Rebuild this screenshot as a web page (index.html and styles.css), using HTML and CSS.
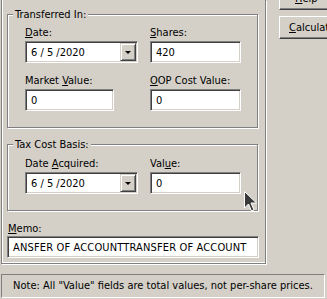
FILE: index.html
```html
<!DOCTYPE html>
<html lang="en">
<head>
    <title>Transfer In</title>
    <link rel="stylesheet" href="styles.css">
</head>
<body>
    <div class="window">
        <div class="panel">
            <fieldset class="group">
                <legend>Transferred In:</legend>
                <div class="fields">
                    <div class="field">
                        <label><u>D</u>ate:</label>
                        <div class="box combo">
                            <span class="value">6 / 5 /2020</span>
                            <span class="drop"><span class="arrow"></span></span>
                        </div>
                    </div>
                    <div class="field">
                        <label><u>S</u>hares:</label>
                        <div class="box wide"><span class="value">420</span></div>
                    </div>
                    <div class="field row2">
                        <label>Market <u>V</u>alue:</label>
                        <div class="box short"><span class="value">0</span></div>
                    </div>
                    <div class="field row2">
                        <label><u>O</u>OP Cost Value:</label>
                        <div class="box wide"><span class="value">0</span></div>
                    </div>
                </div>
            </fieldset>
            <fieldset class="group tax">
                <legend>Tax Cost Basis:</legend>
                <div class="fields">
                    <div class="field">
                        <label>Date <u>A</u>cquired:</label>
                        <div class="box combo">
                            <span class="value">6 / 5 /2020</span>
                            <span class="drop"><span class="arrow"></span></span>
                        </div>
                    </div>
                    <div class="field">
                        <label>Val<u>u</u>e:</label>
                        <div class="box wide"><span class="value">0</span></div>
                    </div>
                </div>
            </fieldset>
            <div class="memo">
                <label><u>M</u>emo:</label>
                <div class="box memo-box"><span class="value">ANSFER OF ACCOUNTTRANSFER OF ACCOUNT</span></div>
            </div>
        </div>
        <div class="buttons">
            <div class="btn help"><u>H</u>elp</div>
            <div class="btn calc"><u>C</u>alculate</div>
        </div>
    </div>
    <div class="note">Note: All "Value" fields are total values, not per-share prices.</div>

    <svg class="cursor" width="14" height="22" viewBox="0 0 14 22">
        <path d="M0.5 0.5 L0.5 17 L4.5 13 L7.5 20 L10 19 L7 12 L12.5 12 Z" fill="#3a3a3a" stroke="#ffffff" stroke-width="1"/>
    </svg>
</body>
</html>
```

FILE: styles.css
```css
body{
    margin: 0;
    background-color: #d4d0c8;
    font-family: "DejaVu Sans Condensed", "DejaVu Sans", sans-serif;
    font-stretch: condensed;
    font-size: 11px;
    line-height: 13px;
    color: #000000;
    overflow: hidden;
}
.window{
    display: flex;
    align-items: flex-start;
}
.panel{
    box-sizing: border-box;
    width: 265px;
    margin-left: 1px;
    padding: 8px 7px 5px 5px;
    border: 1px solid #808080;
    border-top: none;
    box-shadow: inset 1px 0 0 #ffffff, 1px 1px 0 #ffffff, inset 0 -1px 0 #ffffff;
}
.group{
    margin: 0;
    padding: 5px 0 16px 17px;
    border: 1px solid #808080;
    box-shadow: inset 1px 1px 0 #ffffff, 1px 1px 0 #ffffff;
    min-inline-size: 0;
}
.group legend{
    margin-left: -12px;
    padding: 0 2px;
    background-color: #d4d0c8;
}
.tax{
    margin-top: 10px;
    padding-top: 6px;
}
.fields{
    display: grid;
    grid-template-columns: 113px 91px;
    column-gap: 12px;
}
.field{
    display: flex;
    flex-direction: column;
    align-items: flex-start;
}
.row2{
    margin-top: 11px;
}
label{
    display: block;
    height: 13px;
    margin-bottom: 2px;
}
.box{
    box-sizing: border-box;
    height: 22px;
    display: flex;
    align-items: center;
    background-color: #ffffff;
    border: 1px solid;
    border-color: #808080 #ffffff #ffffff #808080;
    box-shadow: inset 1px 1px 0 #404040, inset -1px -1px 0 #d4d0c8;
}
.value{
    padding-left: 5px;
    white-space: nowrap;
}
.combo{
    width: 113px;
    justify-content: space-between;
    padding-right: 1px;
}
.wide{
    width: 91px;
}
.short{
    width: 89px;
}
.drop{
    box-sizing: border-box;
    width: 16px;
    height: 18px;
    display: flex;
    align-items: center;
    justify-content: center;
    background-color: #d4d0c8;
    border: 1px solid;
    border-color: #d4d0c8 #404040 #404040 #d4d0c8;
    box-shadow: inset 1px 1px 0 #ffffff, inset -1px -1px 0 #808080;
}
.arrow{
    width: 0;
    height: 0;
    border-left: 3px solid transparent;
    border-right: 3px solid transparent;
    border-top: 3px solid #000000;
    margin-top: 1px;
}
.memo{
    margin-top: 11px;
}
.memo label{
    margin-left: 1px;
    margin-bottom: 1px;
}
.memo-box{
    width: 252px;
}
.memo-box .value{
    padding-left: 5px;
    letter-spacing: 0.15px;
}
.buttons{
    margin-left: 13px;
    display: flex;
    flex-direction: column;
    gap: 6px;
    margin-top: -13px;
}
.btn{
    box-sizing: border-box;
    width: 75px;
    height: 23px;
    line-height: 21px;
    border: 1px solid;
    border-color: #ffffff #404040 #404040 #ffffff;
    box-shadow: inset -1px -1px 0 #808080;
    white-space: nowrap;
}
.help{
    padding-left: 15px;
}
.calc{
    padding-left: 9px;
}
.note{
    box-sizing: border-box;
    margin: 10px 2px 0 1px;
    height: 24px;
    padding-top: 4px;
    text-align: center;
    border: 1px solid;
    border-color: #808080 #ffffff #ffffff #808080;
}
.cursor{
    position: absolute;
    left: 244px;
    top: 191px;
}
```
